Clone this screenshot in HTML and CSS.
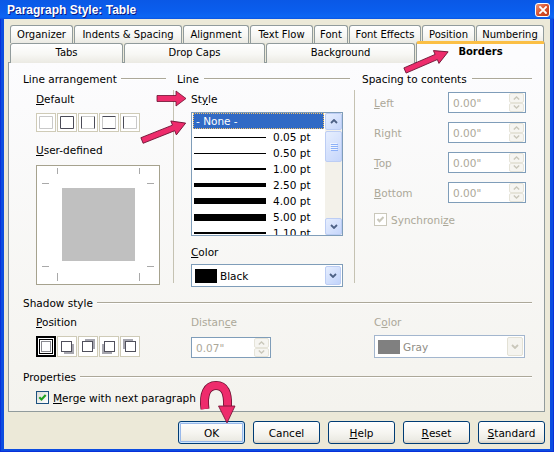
FILE: index.html
```html
<!DOCTYPE html>
<html>
<head>
<meta charset="utf-8">
<title>Paragraph Style: Table</title>
<link rel="stylesheet" href="styles.css">
</head>
<body>
<div class="window">
  <div class="titlebar">
    <span class="title">Paragraph Style: Table</span>
    <span class="close"><svg width="8" height="8" viewBox="0 0 8 8"><path d="M1 1L7 7M7 1L1 7" stroke="#fff" stroke-width="1.8" stroke-linecap="square"/></svg></span>
  </div>
  <div class="client">
    <div class="tabrow row1">
      <div class="tab">Organizer</div>
      <div class="tab">Indents &amp; Spacing</div>
      <div class="tab">Alignment</div>
      <div class="tab">Text Flow</div>
      <div class="tab">Font</div>
      <div class="tab">Font Effects</div>
      <div class="tab">Position</div>
      <div class="tab">Numbering</div>
    </div>
    <div class="tabrow row2">
      <div class="tab">Tabs</div>
      <div class="tab">Drop Caps</div>
      <div class="tab">Background</div>
      <div class="tab active">Borders</div>
    </div>
    <div class="panel">
      <div class="topgrid">
        <div class="col col1">
          <div class="heading"><span>Line arrangement</span><i class="rule"></i></div>
          <div class="body">
            <div class="label"><u>D</u>efault</div>
            <div class="presets">
              <svg class="preset" width="20" height="19" viewBox="0 0 20 19"><rect x=".5" y=".5" width="19" height="18" fill="#fff" stroke="#CFCBB7"/><path d="M3.5 3.5H16.5V15.5H3.5Z" fill="none" stroke="#C9C9C9"/></svg>
              <svg class="preset" width="20" height="19" viewBox="0 0 20 19"><rect x=".5" y=".5" width="19" height="18" fill="#fff" stroke="#CFCBB7"/><path d="M3.5 3.5H16.5V15.5H3.5Z" fill="none" stroke="#4B4B57"/></svg>
              <svg class="preset" width="20" height="19" viewBox="0 0 20 19"><rect x=".5" y=".5" width="19" height="18" fill="#fff" stroke="#CFCBB7"/><path d="M3.5 3.5H16.5M3.5 15.5H16.5" stroke="#C9C9C9"/><path d="M3.5 3.5V15.5M16.5 3.5V15.5" stroke="#4B4B57"/></svg>
              <svg class="preset" width="20" height="19" viewBox="0 0 20 19"><rect x=".5" y=".5" width="19" height="18" fill="#fff" stroke="#CFCBB7"/><path d="M3.5 3.5V15.5M16.5 3.5V15.5" stroke="#C9C9C9"/><path d="M3.5 3.5H16.5M3.5 15.5H16.5" stroke="#4B4B57"/></svg>
              <svg class="preset" width="20" height="19" viewBox="0 0 20 19"><rect x=".5" y=".5" width="19" height="18" fill="#fff" stroke="#CFCBB7"/><path d="M3.5 3.5H16.5V15.5H3.5" fill="none" stroke="#C9C9C9"/><path d="M3.5 3.5V15.5" stroke="#4B4B57"/></svg>
            </div>
            <div class="label ud"><u>U</u>ser-defined</div>
            <svg class="userbox" width="124" height="120" viewBox="0 0 124 120">
              <rect x=".5" y=".5" width="123" height="119" fill="#fff" stroke="#A6A28E"/>
              <rect x="26" y="23" width="73" height="73" fill="#C0C0C0"/>
              <path d="M21.5 3V9M103.5 3V9M21.5 108V116M103.5 108V116M6 18.5H13M111 18.5H118M6 101.5H13M111 101.5H118" stroke="#A9A9A9"/>
            </svg>
          </div>
        </div>
        <div class="col col2">
          <div class="heading"><span>Line</span><i class="rule"></i></div>
          <div class="body">
            <div class="label">St<u>y</u>le</div>
            <div class="listbox">
              <div class="items">
                <div class="item sel">- None -</div>
                <div class="item"><i class="sample w1"></i>0.05 pt</div>
                <div class="item"><i class="sample w1"></i>0.50 pt</div>
                <div class="item"><i class="sample w2"></i>1.00 pt</div>
                <div class="item"><i class="sample w4"></i>2.50 pt</div>
                <div class="item"><i class="sample w6"></i>4.00 pt</div>
                <div class="item"><i class="sample w7"></i>5.00 pt</div>
                <div class="item"><i class="sample w2"></i>1.10 pt</div>
              </div>
              <div class="scrollbar">
                <div class="sbtn"><svg width="8" height="5" viewBox="0 0 8 5"><path d="M1 4L4 1L7 4" fill="none" stroke="#4D6185" stroke-width="1.8"/></svg></div>
                <div class="track">
                  <div class="thumb"><svg width="8" height="8" viewBox="0 0 8 8"><path d="M0 .5H7M0 2.5H7M0 4.5H7M0 6.5H7" stroke="#EEF4FE"/><path d="M1 1.5H8M1 3.5H8M1 5.5H8M1 7.5H8" stroke="#8CB0F8"/></svg></div>
                </div>
                <div class="sbtn"><svg width="8" height="5" viewBox="0 0 8 5"><path d="M1 1L4 4L7 1" fill="none" stroke="#4D6185" stroke-width="1.8"/></svg></div>
              </div>
            </div>
            <div class="label clabel"><u>C</u>olor</div>
            <div class="combo">
              <i class="swatch black"></i><span class="ctext">Black</span>
              <span class="dbtn"><svg width="8" height="5" viewBox="0 0 8 5"><path d="M1 1L4 4L7 1" fill="none" stroke="#4D6185" stroke-width="1.8"/></svg></span>
            </div>
          </div>
        </div>
        <div class="col col3">
          <div class="heading"><span>Spacing to contents</span><i class="rule"></i></div>
          <div class="body">
            <div class="fields">
              <span class="label dis"><u>L</u>eft</span>
              <div class="spin"><span class="val">0.00"</span><span class="sbs"><span class="sb"><svg width="7" height="4" viewBox="0 0 7 4"><path d="M.8 3.5L3.5 1L6.2 3.5" fill="none" stroke="#C9C7BA" stroke-width="1.4"/></svg></span><span class="sb"><svg width="7" height="4" viewBox="0 0 7 4"><path d="M.8 .5L3.5 3L6.2 .5" fill="none" stroke="#C9C7BA" stroke-width="1.4"/></svg></span></span></div>
              <span class="label dis">Ri<u>g</u>ht</span>
              <div class="spin"><span class="val">0.00"</span><span class="sbs"><span class="sb"><svg width="7" height="4" viewBox="0 0 7 4"><path d="M.8 3.5L3.5 1L6.2 3.5" fill="none" stroke="#C9C7BA" stroke-width="1.4"/></svg></span><span class="sb"><svg width="7" height="4" viewBox="0 0 7 4"><path d="M.8 .5L3.5 3L6.2 .5" fill="none" stroke="#C9C7BA" stroke-width="1.4"/></svg></span></span></div>
              <span class="label dis"><u>T</u>op</span>
              <div class="spin"><span class="val">0.00"</span><span class="sbs"><span class="sb"><svg width="7" height="4" viewBox="0 0 7 4"><path d="M.8 3.5L3.5 1L6.2 3.5" fill="none" stroke="#C9C7BA" stroke-width="1.4"/></svg></span><span class="sb"><svg width="7" height="4" viewBox="0 0 7 4"><path d="M.8 .5L3.5 3L6.2 .5" fill="none" stroke="#C9C7BA" stroke-width="1.4"/></svg></span></span></div>
              <span class="label dis"><u>B</u>ottom</span>
              <div class="spin"><span class="val">0.00"</span><span class="sbs"><span class="sb"><svg width="7" height="4" viewBox="0 0 7 4"><path d="M.8 3.5L3.5 1L6.2 3.5" fill="none" stroke="#C9C7BA" stroke-width="1.4"/></svg></span><span class="sb"><svg width="7" height="4" viewBox="0 0 7 4"><path d="M.8 .5L3.5 3L6.2 .5" fill="none" stroke="#C9C7BA" stroke-width="1.4"/></svg></span></span></div>
            </div>
            <div class="check sync">
              <span class="cb dis"><svg width="11" height="11" viewBox="0 0 11 11"><path d="M2.5 5L4.5 7.2L8.5 3" fill="none" stroke="#CAC8BB" stroke-width="2"/></svg></span>
              <span class="label dis">Synchroni<u>z</u>e</span>
            </div>
          </div>
        </div>
      </div>

      <div class="section shadow">
        <div class="heading"><span>Shadow style</span><i class="rule"></i></div>
        <div class="sgrid">
          <div class="scol">
            <div class="label"><u>P</u>osition</div>
            <div class="spresets">
              <svg width="20" height="21" viewBox="0 0 20 21"><rect x="1" y="1" width="18" height="19" fill="#fff" stroke="#000" stroke-width="2"/><rect x="3.5" y="3.5" width="13" height="14" fill="none" stroke="#000"/><rect x="5.5" y="5.5" width="9" height="10" fill="#fff" stroke="#8A8A90"/></svg>
              <svg width="20" height="21" viewBox="0 0 20 21"><rect x=".5" y=".5" width="19" height="20" fill="#fff" stroke="#CFCBB7"/><rect x="7" y="8" width="10" height="10" fill="#A6A6AE"/><rect x="4.5" y="5.5" width="10" height="10" fill="#fff" stroke="#50505C"/></svg>
              <svg width="20" height="21" viewBox="0 0 20 21"><rect x=".5" y=".5" width="19" height="20" fill="#fff" stroke="#CFCBB7"/><rect x="7" y="3" width="10" height="10" fill="#A6A6AE"/><rect x="4.5" y="5.5" width="10" height="10" fill="#fff" stroke="#50505C"/></svg>
              <svg width="20" height="21" viewBox="0 0 20 21"><rect x=".5" y=".5" width="19" height="20" fill="#fff" stroke="#CFCBB7"/><rect x="3" y="8" width="10" height="10" fill="#A6A6AE"/><rect x="5.5" y="5.5" width="10" height="10" fill="#fff" stroke="#50505C"/></svg>
              <svg width="20" height="21" viewBox="0 0 20 21"><rect x=".5" y=".5" width="19" height="20" fill="#fff" stroke="#CFCBB7"/><rect x="3" y="3" width="10" height="10" fill="#A6A6AE"/><rect x="5.5" y="5.5" width="10" height="10" fill="#fff" stroke="#50505C"/></svg>
            </div>
          </div>
          <div class="scol">
            <div class="label dis">Distan<u>c</u>e</div>
            <div class="spin dist"><span class="val">0.07"</span><span class="sbs"><span class="sb"><svg width="7" height="4" viewBox="0 0 7 4"><path d="M.8 3.5L3.5 1L6.2 3.5" fill="none" stroke="#C9C7BA" stroke-width="1.4"/></svg></span><span class="sb"><svg width="7" height="4" viewBox="0 0 7 4"><path d="M.8 .5L3.5 3L6.2 .5" fill="none" stroke="#C9C7BA" stroke-width="1.4"/></svg></span></span></div>
          </div>
          <div class="scol">
            <div class="label dis">C<u>o</u>lor</div>
            <div class="combo dis">
              <i class="swatch gray"></i><span class="ctext">Gray</span>
              <span class="dbtn"><svg width="8" height="5" viewBox="0 0 8 5"><path d="M1 1L4 4L7 1" fill="none" stroke="#C9C7BA" stroke-width="1.8"/></svg></span>
            </div>
          </div>
        </div>
      </div>

      <div class="section props">
        <div class="heading"><span>Properties</span><i class="rule"></i></div>
        <div class="check merge">
          <span class="cb"><svg width="11" height="11" viewBox="0 0 11 11"><path d="M2.3 5.2L4.5 7.5L8.7 3" fill="none" stroke="#21A121" stroke-width="2.1"/></svg></span>
          <span class="label"><u>M</u>erge with next paragraph</span>
        </div>
      </div>
    </div>

    <div class="buttons">
      <span class="btn def">OK</span>
      <span class="btn">Cancel</span>
      <span class="btn"><u>H</u>elp</span>
      <span class="btn"><u>R</u>eset</span>
      <span class="btn"><u>S</u>tandard</span>
    </div>
  </div>

  <svg class="overlay" width="554" height="452" viewBox="0 0 554 452">
    <g fill="#EE2C6C" stroke="#6B1030" stroke-width="0.8" stroke-linejoin="round">
      <path transform="translate(157,98.5)" d="M0,-3L19,-3L19,-7.5L29,0L19,7.5L19,3L0,3Z"/>
      <path transform="translate(142,140.5) rotate(-21.7)" d="M0,-3L34,-3L34,-7.5L47,0L34,7.5L34,3L0,3Z"/>
      <path transform="translate(405,70.5) rotate(-23.4)" d="M0,-2.8L34,-2.8L34,-7L47,0L34,7L34,2.8L0,2.8Z"/>
    </g>
    <path d="M205,409 C203,394 207,385.5 216,385.5 C225,385.5 228,393 227.5,406" fill="none" stroke="#6B1030" stroke-width="9"/>
    <path d="M205,409 C203,394 207,385.5 216,385.5 C225,385.5 228,393 227.5,406" fill="none" stroke="#EE2C6C" stroke-width="7.4"/>
    <path d="M218.5,406 L235,406 L227,423 Z" fill="#EE2C6C" stroke="#6B1030" stroke-width="0.8" stroke-linejoin="round"/>
  </svg>
</div>
</body>
</html>
```
FILE: styles.css
```css
* { box-sizing: border-box; }
html, body { margin: 0; padding: 0; }
body {
  width: 554px;
  height: 452px;
  overflow: hidden;
  font-family: "DejaVu Sans", sans-serif;
  font-size: 10.5px;
  color: #000;
  background: #fff;
}
u { text-decoration: underline; text-underline-offset: 1px; }

.window {
  position: relative;
  width: 554px;
  height: 452px;
  background: #0C4DE0;
  display: flex;
  flex-direction: column;
  box-shadow: inset 1px 0 0 #0831D9, inset -1px 0 0 #0831D9, inset 0 -1px 0 #0831D9;
}

.titlebar {
  height: 19px;
  flex: none;
  display: flex;
  align-items: center;
  justify-content: space-between;
  padding: 0 4px 0 7px;
  background: linear-gradient(#0A58E6, #0A5EEE 60%, #0C66F4 90%, #0A52E2);
}
.title {
  font-family: "Liberation Sans", sans-serif;
  font-weight: bold;
  font-size: 12px;
  color: #fff;
  text-shadow: 1px 1px 0 #0A1883;
  white-space: nowrap;
}
.close {
  width: 15px;
  height: 14px;
  border: 1px solid #fff;
  border-radius: 3px;
  background: linear-gradient(135deg, #F09A7E, #D9502C 50%, #C13D1A);
  display: flex;
  align-items: center;
  justify-content: center;
}

.client {
  flex: 1;
  margin: 0 4px 3px;
  background: #ECE9D8;
  padding: 6px 5px 0 4px;
}

.tabrow {
  display: grid;
  column-gap: 1px;
  margin-left: 2px;
}
.row1 { grid-template-columns: 63px 108px 66px 63px 34px 72px 53px 68px; height: 18px; }
.row2 { grid-template-columns: 113px 141px 149px 129px; height: 19px; }
.tab {
  border: 1px solid #919B9C;
  border-bottom: 0;
  border-radius: 3px 3px 0 0;
  background: linear-gradient(#FFFFFF, #F7F7F4 55%, #EBEAE3);
  text-align: center;
  white-space: nowrap;
  font-size: 10px;
  overflow: hidden;
}
.row1 .tab { line-height: 17px; }
.row2 .tab { line-height: 18px; }
.tab.active {
  margin-top: -2px;
  height: 22px;
  position: relative;
  z-index: 1;
  background: #FCFCFE;
  border-top: 3px solid #FBBF45;
  line-height: 16px;
  font-weight: bold;
}

.panel {
  height: 350px;
  border: 1px solid #919B9C;
  background: linear-gradient(#FCFCFE, #F4F3EE);
  padding: 10px 12px 0 14px;
}

.topgrid {
  display: grid;
  grid-template-columns: 150px 181px 1fr;
}
.heading {
  display: flex;
  align-items: center;
  height: 12px;
  line-height: 12px;
  white-space: nowrap;
}
.rule {
  flex: 1;
  height: 2px;
  border-top: 1px solid #ACA899;
  border-bottom: 1px solid #fff;
  margin-left: 4px;
}
.col1 .rule { margin-right: 7px; }
.col2 .heading { padding-left: 4px; }
.col2 .rule { margin-left: 5px; margin-right: 4px; }
.col3 .heading { padding-left: 8px; }
.col3 .rule { margin-left: 5px; }

.body { margin-top: 5px; }
.col1 .body { padding: 3px 0 0 13px; }
.label { display: block; height: 12px; line-height: 12px; white-space: nowrap; }
.label.dis { color: #ACA899; }
.presets { display: flex; gap: 1px; margin-top: 8px; height: 19px; }
.preset { display: block; flex: none; }
.ud { margin-top: 12px; }
.userbox { display: block; margin-top: 9px; }

.col2 .body {
  border-left: 1px solid #C5C2B2;
  height: 193px;
  padding: 3px 0 0 17px;
}
.listbox {
  margin-top: 7px;
  width: 152px;
  height: 124px;
  border: 1px solid #7F9DB9;
  background: #fff;
  display: flex;
}
.items { flex: 1; overflow: hidden; }
.item {
  height: 16px;
  display: flex;
  align-items: center;
  padding-left: 2px;
  white-space: nowrap;
}
.item.sel {
  background: #316AC5;
  color: #fff;
  outline: 1px dotted #F3C26A;
  outline-offset: -1px;
  padding-left: 3px;
  margin: 0 1px;
}
.sample { display: block; flex: none; width: 72px; background: #000; margin-right: 7px; }
.w1 { height: 1px; }
.w2 { height: 2px; }
.w4 { height: 4px; }
.w6 { height: 6px; }
.w7 { height: 7px; }

.scrollbar {
  width: 17px;
  display: flex;
  flex-direction: column;
  background: #F3F1EA;
}
.sbtn, .thumb {
  border: 1px solid #BCCDF4;
  border-radius: 2px;
  background: linear-gradient(135deg, #E6EEFE, #C6D6FB);
  display: flex;
  align-items: center;
  justify-content: center;
}
.sbtn { height: 17px; flex: none; }
.track { flex: 1; padding-top: 1px; }
.thumb { height: 31px; }

.clabel { margin-top: 10px; }
.combo {
  margin-top: 6px;
  width: 152px;
  height: 23px;
  border: 1px solid #7F9DB9;
  background: #fff;
  display: flex;
  align-items: center;
  padding: 0 1px 0 3px;
}
.swatch { display: block; width: 22px; height: 14px; margin-right: 3px; }
.swatch.black { background: #000; }
.swatch.gray { background: #808080; }
.ctext { flex: 1; white-space: nowrap; }
.dbtn {
  width: 16px;
  height: 19px;
  border: 1px solid #BCCDF4;
  border-radius: 2px;
  background: linear-gradient(135deg, #E6EEFE, #C1D3FB);
  display: flex;
  align-items: center;
  justify-content: center;
}
.combo.dis { width: 151px; border-color: #A3B6CE; padding-left: 3px; }
.combo.dis .ctext { color: #8F8D85; }
.combo.dis .dbtn { border-color: #E3E1D5; background: #F5F4EF; }

.col3 .body {
  border-left: 1px solid #C5C2B2;
  height: 193px;
  padding: 2px 0 0 19px;
}
.fields {
  display: grid;
  grid-template-columns: 74px 78px;
  row-gap: 9px;
  align-items: center;
}
.spin {
  height: 21px;
  border: 1px solid #7F9DB9;
  background: #fff;
  display: flex;
  align-items: center;
  padding: 0 1px 0 4px;
  color: #ACA899;
}
.val { flex: 1; white-space: nowrap; }
.sbs { width: 15px; height: 19px; display: flex; flex-direction: column; }
.sb {
  flex: 1;
  border: 1px solid #E6E4D9;
  border-radius: 2px;
  background: #F6F5F1;
  display: flex;
  align-items: center;
  justify-content: center;
}

.check { display: flex; align-items: center; gap: 4px; height: 13px; }
.sync { margin-top: 10px; }
.cb {
  width: 13px;
  height: 13px;
  border: 1px solid #1C5180;
  background: linear-gradient(135deg, #DCDCD7, #fff);
  display: flex;
  align-items: center;
  justify-content: center;
  flex: none;
}
.cb.dis { border-color: #CAC8BB; background: #fff; }

.section { margin-top: 12px; }
.shadow { margin-top: 12px; }
.sgrid {
  display: grid;
  grid-template-columns: 155px 183px 1fr;
  padding-left: 13px;
  margin-top: 7px;
  align-items: start;
}
.spresets { display: flex; gap: 1px; margin-top: 8px; }
.spresets svg { display: block; flex: none; }
.spin.dist { width: 80px; margin-top: 9px; }
.scol .combo { margin-top: 7px; }

.props { margin-top: 13px; }
.merge { margin-top: 8px; padding-left: 13px; }

.buttons {
  display: flex;
  justify-content: flex-end;
  gap: 8px;
  margin-top: 9px;
}
.btn {
  width: 67px;
  height: 23px;
  border: 1px solid #003C74;
  border-radius: 3px;
  background: linear-gradient(#FFFFFF, #F5F4EF 55%, #ECEBE4 85%, #D6D0C5);
  display: flex;
  align-items: center;
  justify-content: center;
  white-space: nowrap;
}
.btn.def { box-shadow: inset 0 0 0 1px #CEE7FF, inset 0 0 0 2px #98B8EA; }

.overlay {
  position: absolute;
  left: 0;
  top: 0;
  z-index: 5;
  pointer-events: none;
}
```
